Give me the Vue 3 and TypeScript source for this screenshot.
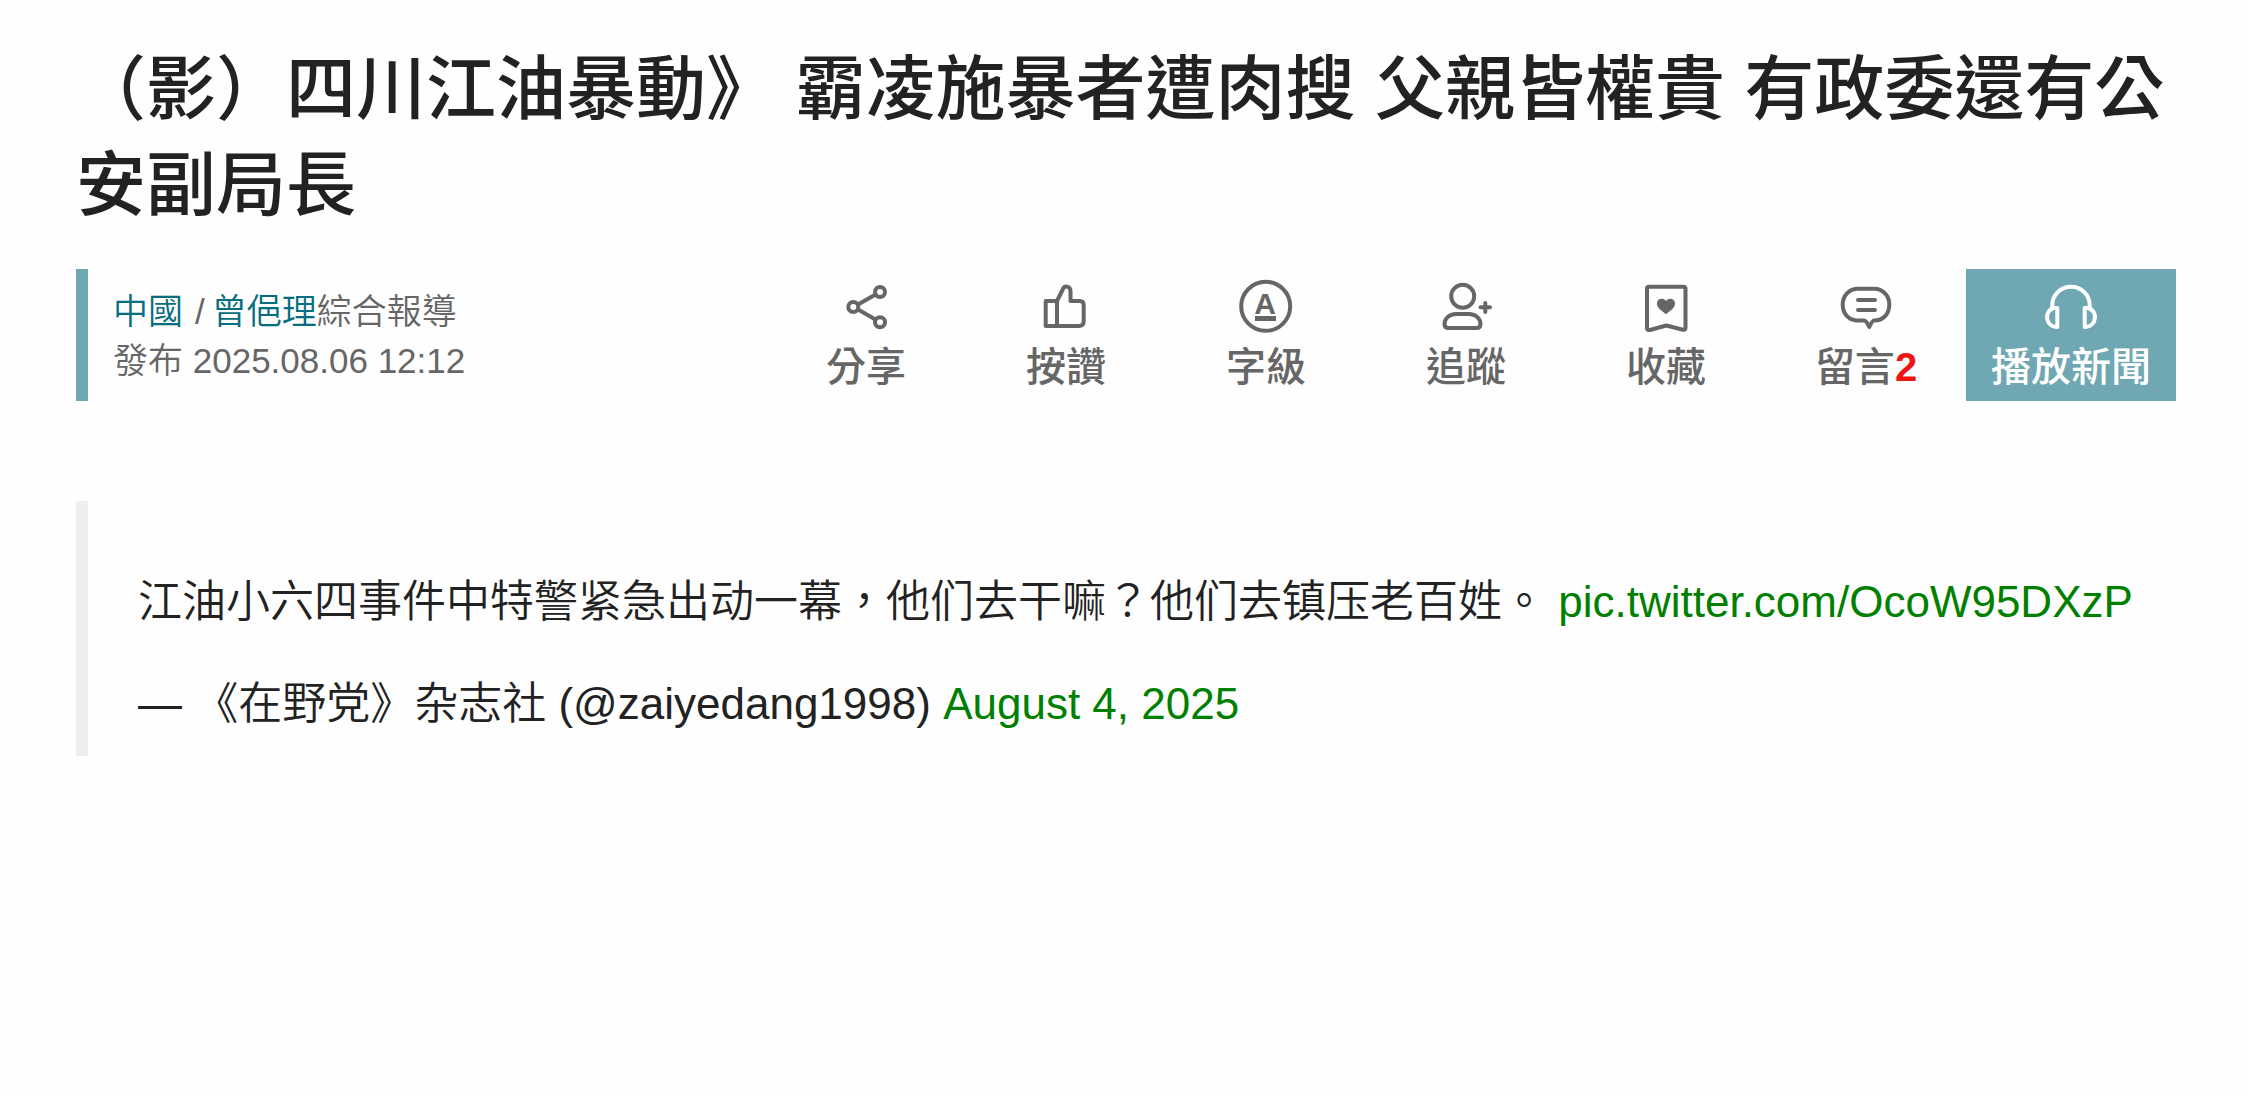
<script setup lang="ts">
interface Action {
  id: string
  label: string
  count?: number
}

const actions: Action[] = [
  { id: 'share', label: '分享' },
  { id: 'like', label: '按讚' },
  { id: 'size', label: '字級' },
  { id: 'follow', label: '追蹤' },
  { id: 'save', label: '收藏' },
  { id: 'comment', label: '留言', count: 2 },
  { id: 'play', label: '播放新聞' },
]
</script>

<template>
  <article class="article" lang="zh-Hant">
    <h1 class="title">（影）四川江油暴動》 霸凌施暴者遭肉搜 父親皆權貴 有政委還有公安副局長</h1>

    <div class="meta">
      <div class="byline">
        <div><a href="#china">中國</a><span class="slash">/</span><a href="#author">曾俋理</a>綜合報導</div>
        <div>發布 <time datetime="2025-08-06T12:12">2025.08.06 12:12</time></div>
      </div>

      <div class="actions">
        <button
          v-for="action in actions"
          :key="action.id"
          type="button"
          class="action"
          :class="{ play: action.id === 'play' }"
        >
          <svg class="icon" viewBox="0 0 60 60" aria-hidden="true">
            <g v-if="action.id === 'share'">
              <path d="M22 28.500 39.500 18.500M22 33.500l17.500 10" />
              <circle cx="44" cy="16" r="5" />
              <circle cx="17.300" cy="31" r="5" />
              <circle cx="44" cy="46.300" r="5" />
            </g>
            <g v-else-if="action.id === 'like'">
              <path d="M21 25H9.700V50H43q4.700 0 4.700-5V29q0-4-4-4H34.500V15.500c0-6-6.500-6.500-8-1.500L21 25v25" />
            </g>
            <g v-else-if="action.id === 'size'">
              <circle cx="29.700" cy="30.300" r="24.500" />
              <text x="29" y="38" text-anchor="middle" class="letter">A</text>
              <rect class="solid" x="19" y="40" width="21" height="5" />
            </g>
            <g v-else-if="action.id === 'follow'">
              <circle cx="26.700" cy="20.300" r="11.500" />
              <path d="M20 38h13c7 0 11.500 5 11.500 10q0 4-4 4h-28q-4 0-4-4c0-5 4.500-10 11.500-10z" />
              <path d="M44.500 31.300h9.500M49.300 27v9" />
            </g>
            <g v-else-if="action.id === 'save'">
              <path d="M13 10.700h34.500q2 0 2 2v39q0 2.500-2.500 2L30.300 49.500 14 54q-3 .5-3-2V12.700q0-2 2-2z" />
              <path class="solid" d="M30 38.300c-4-3.300-9-6-9-10.700 0-5.500 6.500-6.500 9-2.500 2.500-4 9-3 9 2.500 0 4.700-5 7.400-9 10.700z" />
            </g>
            <g v-else-if="action.id === 'comment'">
              <path d="M22 12.700h16c9 0 15.300 7 15.300 15.800 0 10-6.300 16-15.300 16-1.500 0-3 3-4.700 6.500-1.700-3.500-3-6.500-5.300-6.500h-6C13 44.500 6.700 38 6.700 28.500 6.700 19.700 13 12.700 22 12.700z" />
              <path d="M22 24h17M22 34h17" />
            </g>
            <g v-else>
              <path d="M11.300 31v-2a18.700 18.300 0 0 1 37.400 0v2" />
              <path d="M16.300 32v19C4 51 2.500 34.500 13 32zM43.700 32v19C56 51 57.500 34.500 47 32z" />
            </g>
          </svg>
          <span>{{ action.label }}<b v-if="action.count">{{ action.count }}</b></span>
        </button>
      </div>
    </div>

    <blockquote class="quote">
      <p>江油小六四事件中特警紧急出动一幕，他们去干嘛？他们去镇压老百姓。 <a href="#media">pic.twitter.com/OcoW95DXzP</a></p>
      <p>— 《在野党》杂志社 (@zaiyedang1998) <a href="#tweet">August 4, 2025</a></p>
    </blockquote>
  </article>
</template>

<style>
body {
  background: #fefefe;
}
</style>

<style scoped>
.article {
  padding: 42px 71px 42px 76px;
  color: #222;
  font-family: "Liberation Sans", "Noto Sans CJK TC", sans-serif;
  text-spacing-trim: space-all;
}

a {
  text-decoration: none;
}

.title {
  margin: 0 0 35px;
  font-size: 70px;
  line-height: 96px;
  font-weight: 500;
}

.meta {
  display: flex;
  justify-content: space-between;
  min-height: 132px;
  border-left: 12px solid #6fa8b3;
}

.byline {
  display: flex;
  flex-direction: column;
  justify-content: center;
  padding: 2px 0 0 25px;
  color: #666;
  font-size: 35px;
  line-height: 49px;
  font-weight: 350;
}

.byline a {
  color: #066e80;
}

.slash {
  margin: 0 7px 0 12px;
}

.actions {
  display: flex;
}

.action {
  display: flex;
  flex-direction: column;
  align-items: center;
  gap: 7px;
  width: 200px;
  padding: 7px 0 10px;
  border: 0;
  background: none;
  color: #666;
  font-family: inherit;
  font-size: 40px;
  line-height: 48px;
  font-weight: 500;
  cursor: pointer;
}

.action.play {
  width: 210px;
  background: #6fa8b3;
  color: #fff;
}

.action b {
  color: #ee1515;
  font-weight: 700;
}

.icon {
  width: 60px;
  height: 60px;
  fill: none;
  stroke: currentColor;
  stroke-width: 4;
  stroke-linecap: round;
  stroke-linejoin: round;
}

.solid,
.letter {
  fill: currentColor;
  stroke: none;
}

.letter {
  font-size: 30px;
  font-weight: 700;
}

.quote {
  margin: 100px 0 0;
  padding: 71px 0 22px 50px;
  border-left: 12px solid #eee;
  font-size: 44px;
  line-height: 60px;
  font-weight: 350;
}

.quote p {
  margin: 0 0 42px;
}

.quote p:last-child {
  margin-bottom: 0;
}

.quote a {
  color: #008000;
}
</style>
